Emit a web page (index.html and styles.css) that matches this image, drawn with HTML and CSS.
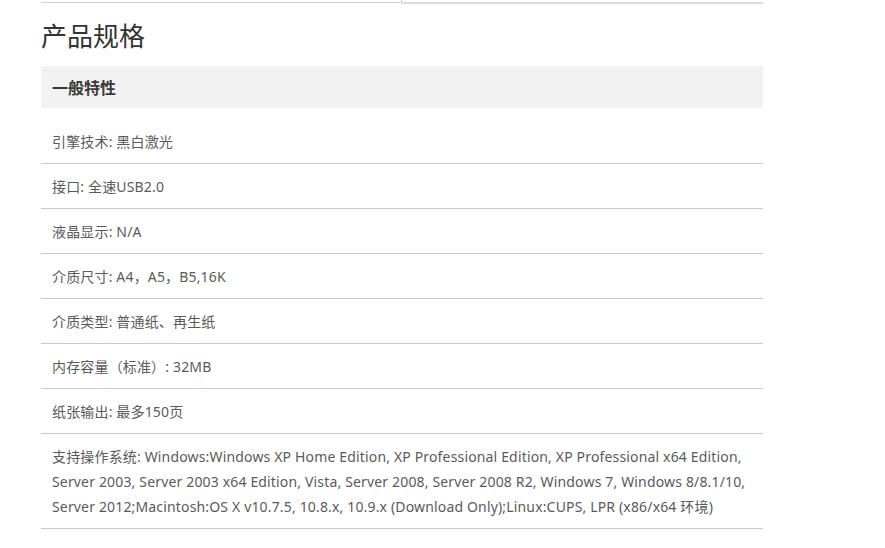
FILE: index.html
```html
<!DOCTYPE html>
<html lang="zh-CN">
<head>
<meta charset="utf-8">
<link rel="stylesheet" href="styles.css">
</head>
<body>
<div class="page">
  <div class="tabs">
    <div class="tab tab-left"></div>
    <div class="tab tab-right"></div>
  </div>
  <h2 class="title">产品规格</h2>
  <div class="group">
    <div class="group-head">一般特性</div>
    <ul class="specs">
      <li>引擎技术: 黑白激光</li>
      <li>接口: 全速USB2.0</li>
      <li>液晶显示: N/A</li>
      <li>介质尺寸: A4，A5，B5,16K</li>
      <li>介质类型: 普通纸、再生纸</li>
      <li>内存容量（标准）: 32MB</li>
      <li>纸张输出: 最多150页</li>
      <li>支持操作系统: Windows:Windows XP Home Edition, XP Professional Edition, XP Professional x64 Edition, Server 2003, Server 2003 x64 Edition, Vista, Server 2008, Server 2008 R2, Windows 7, Windows 8/8.1/10, Server 2012;Macintosh:OS X v10.7.5, 10.8.x, 10.9.x (Download Only);Linux:CUPS, LPR (x86/x64 环境)</li>
    </ul>
  </div>
</div>
</body>
</html>
```

FILE: styles.css
```css
html, body {
  margin: 0;
  padding: 0;
  background: #fff;
}
body {
  font-family: "Noto Sans", "Noto Sans CJK SC", sans-serif;
  color: #5a5a5a;
}
.page {
  margin-left: 41px;
  width: 722px;
}
.tabs {
  display: flex;
  height: 4px;
}
.tab-left {
  width: 360px;
  height: 2px;
  border-bottom: 1px solid #d0d0d0;
  border-right: 1px solid #d0d0d0;
}
.tab-right {
  flex: 1;
  height: 2px;
  border-bottom: 2px solid #dcdcdc;
}
.title {
  margin: 0;
  padding-top: 14px;
  height: 48px;
  font-size: 26px;
  line-height: 34px;
  font-weight: normal;
  color: #333;
  font-family: "Noto Sans CJK SC", sans-serif;
}
.group-head {
  background: #f2f2f2;
  height: 42px;
  line-height: 42px;
  padding-left: 11px;
  font-size: 16px;
  font-weight: bold;
  color: #3a3a3a;
  font-family: "Noto Sans CJK SC", sans-serif;
}
.specs {
  list-style: none;
  margin: 11px 0 0;
  padding: 0;
}
.specs li {
  padding: 10px 10px 9px 11px;
  line-height: 25px;
  font-size: 14px;
  letter-spacing: 0.16px;
  border-bottom: 1px solid #c8c8c8;
}
```
